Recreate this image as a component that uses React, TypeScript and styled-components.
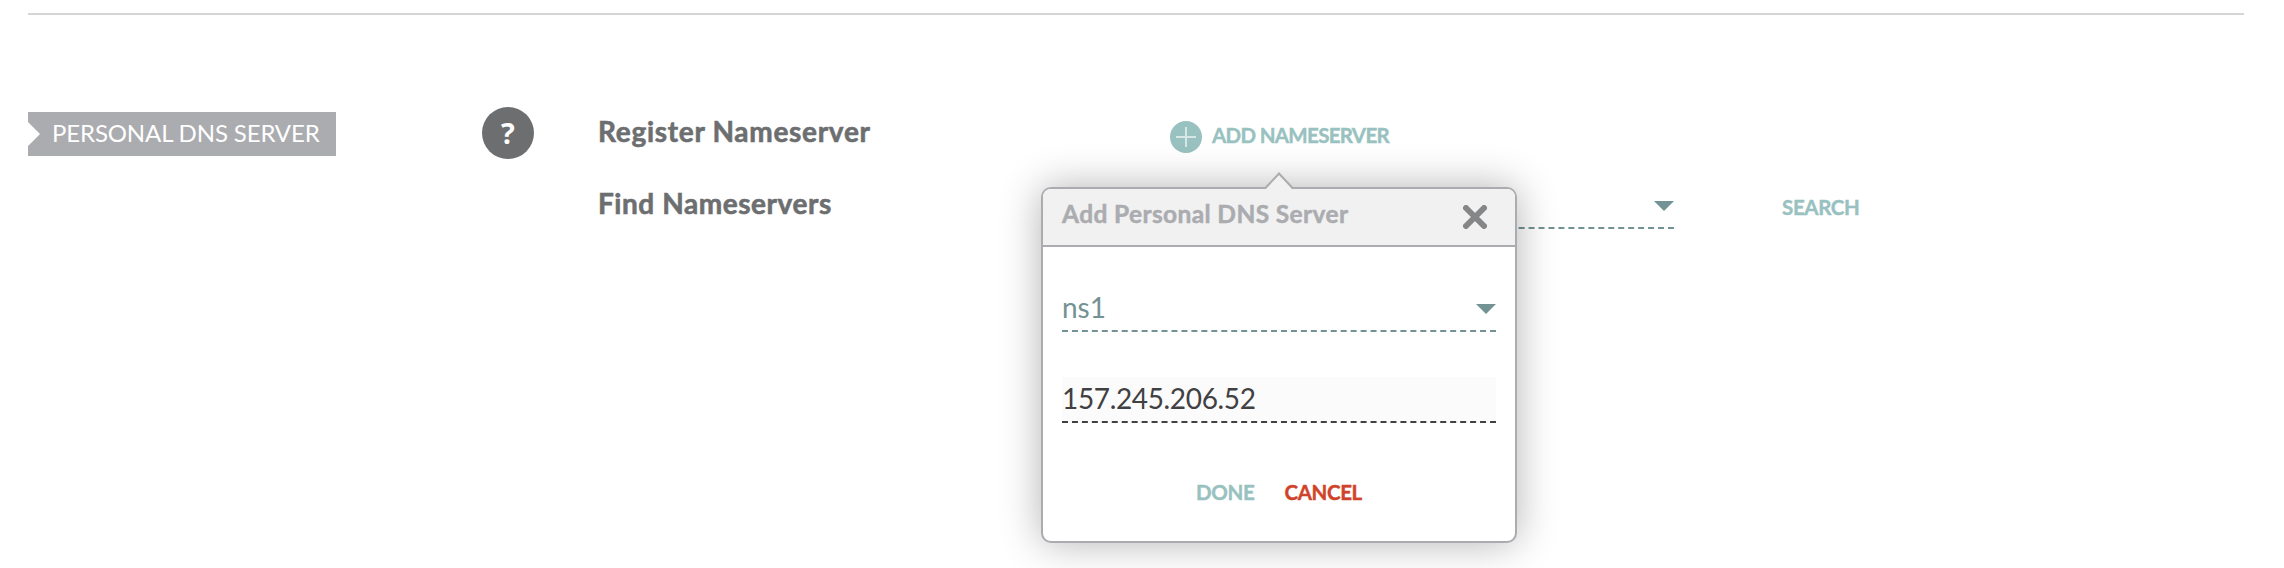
import React from "react";
import styled, { createGlobalStyle } from "styled-components";

const colors = {
  teal: "#98c1c0",
  tealDark: "#739294",
  gray: "#6d6e70",
  silver: "#abacb0",
  ink: "#414042",
  red: "#d0432b",
};

const GlobalStyle = createGlobalStyle`
  * { box-sizing: border-box; }
  body {
    margin: 0;
    background: #fff;
    font-family: Lato, "Open Sans", sans-serif;
    overflow: hidden;
  }
  button, input { font-family: inherit; margin: 0; padding: 0; border: 0; background: none; }
  svg { display: block; }
`;

const Page = styled.main`
  height: 568px;
  padding: 13px 40px 0 28px;
  overflow: hidden;
`;

const Divider = styled.hr`
  height: 2px;
  margin: 0;
  border: 0;
  background: #d5d5d6;
`;

const Section = styled.section`
  display: grid;
  grid-template-columns: 454px 116px 1fr;
  align-items: start;
  padding-top: 80px;
`;

const Ribbon = styled.h2`
  width: 308px;
  height: 44px;
  margin: 17px 0 0;
  padding-left: 24px;
  background: ${colors.silver};
  color: #fff;
  font-size: 24px;
  font-weight: 400;
  line-height: 42px;
  letter-spacing: -0.14px;
  white-space: nowrap;
  clip-path: polygon(0 0, 100% 0, 100% 100%, 0 100%, 0 34px, 12px 22px, 0 10px);
`;

const Help = styled.button`
  width: 52px;
  height: 52px;
  margin-top: 12px;
  border-radius: 50%;
  background: ${colors.gray};
  color: #fff;
  font-family: "Open Sans", sans-serif;
  font-size: 29px;
  font-weight: 700;
  line-height: 52px;
`;

const Row = styled.div`
  display: flex;
  align-items: center;
  height: 72px;
`;

const Label = styled.div<{ $spacing: number }>`
  flex: 0 0 572px;
  color: ${colors.gray};
  font-size: 28px;
  font-weight: 700;
  line-height: 72px;
  letter-spacing: ${(p) => p.$spacing}px;
  -webkit-text-stroke: 0.6px currentColor;
`;

const Action = styled.button<{ $color?: string; $spacing?: number }>`
  color: ${(p) => p.$color ?? colors.teal};
  font-size: 20.5px;
  font-weight: 700;
  line-height: 32px;
  letter-spacing: ${(p) => p.$spacing ?? -0.35}px;
  white-space: nowrap;
  -webkit-text-stroke: 0.4px currentColor;
`;

const AddAnchor = styled.div`
  position: relative;
  display: flex;
  align-items: center;
  gap: 10px;
  margin-top: 12px;

  > ${Action} { margin-bottom: 4px; }
`;

const Select = styled.div<{ $width: number; $height: number }>`
  display: flex;
  align-items: center;
  justify-content: space-between;
  width: ${(p) => p.$width}px;
  height: ${(p) => p.$height}px;
  border-bottom: 2px dashed ${colors.tealDark};
  color: ${colors.tealDark};
  font-size: 28px;
`;

const SelectValue = styled.span`
  padding-bottom: 4px;
`;

const FindSlot = styled.div`
  padding-top: 8px;
`;

const SearchSlot = styled.div`
  margin: 7px 0 0 108px;
`;

const Popover = styled.div`
  position: absolute;
  z-index: 2;
  top: 68px;
  left: -129px;
  width: 476px;
  height: 356px;
  border: 2px solid ${colors.silver};
  border-radius: 10px;
  background: #fff;
  box-shadow: 0 0 40px rgba(0, 0, 0, 0.3);
`;

const Pointer = styled.svg`
  position: absolute;
  top: -18px;
  left: 221px;
`;

const PopoverHeader = styled.header`
  display: flex;
  align-items: flex-start;
  justify-content: space-between;
  height: 58px;
  padding: 16px 28px 0 19px;
  border-bottom: 2px solid ${colors.silver};
  border-radius: 8px 8px 0 0;
  background: #f1f1f1;
`;

const Title = styled.h3`
  margin: -7px 0 0;
  color: ${colors.silver};
  font-size: 24.5px;
  font-weight: 700;
  line-height: 32px;
  letter-spacing: 0.38px;
  -webkit-text-stroke: 0.5px currentColor;
`;

const Form = styled.div`
  display: flex;
  flex-direction: column;
  padding: 41px 19px 0;
`;

const Address = styled.input`
  width: 434px;
  height: 46px;
  margin-top: 45px;
  padding-bottom: 2px;
  border-bottom: 2px dashed ${colors.ink};
  background: #fbfbfb;
  color: ${colors.ink};
  font-size: 28px;
  letter-spacing: -0.35px;
  outline: none;
`;

const Buttons = styled.div`
  display: flex;
  justify-content: center;
  gap: 30px;
  margin-top: 53px;
`;

const Caret = () => (
  <svg width="20" height="10" viewBox="0 0 20 10" aria-hidden="true">
    <path d="M0 0H20L10 10Z" fill={colors.tealDark} />
  </svg>
);

const PlusIcon = () => (
  <svg width="32" height="32" viewBox="0 0 32 32" aria-hidden="true">
    <circle cx="16" cy="16" r="16" fill={colors.teal} />
    <path d="M6 16H26M16 6V26" stroke="#d6e7e6" strokeWidth="2" />
  </svg>
);

const CloseIcon = () => (
  <svg width="24" height="24" viewBox="0 0 24 24" aria-hidden="true">
    <path d="M3 3L21 21M21 3L3 21" stroke="#858688" strokeWidth="6" strokeLinecap="round" />
  </svg>
);

export default function App() {
  return (
    <Page>
      <GlobalStyle />
      <Divider />
      <Section>
        <Ribbon>PERSONAL DNS SERVER</Ribbon>
        <Help>?</Help>
        <div>
          <Row>
            <Label $spacing={0.7}>Register Nameserver</Label>
            <AddAnchor>
              <PlusIcon />
              <Action $spacing={-0.68}>ADD NAMESERVER</Action>
              <Popover>
                <Pointer width="30" height="20" viewBox="0 0 30 20" aria-hidden="true">
                  <path d="M1 20V18.5L15 3L29 18.5V20Z" fill="#f1f1f1" />
                  <path d="M1 17.5L15 2.5L29 17.5" fill="none" stroke={colors.silver} strokeWidth="2" />
                </Pointer>
                <PopoverHeader>
                  <Title>Add Personal DNS Server</Title>
                  <CloseIcon />
                </PopoverHeader>
                <Form>
                  <Select $width={434} $height={44}>
                    <SelectValue>ns1</SelectValue>
                    <Caret />
                  </Select>
                  <Address defaultValue="157.245.206.52" />
                  <Buttons>
                    <Action>DONE</Action>
                    <Action $color={colors.red}>CANCEL</Action>
                  </Buttons>
                </Form>
              </Popover>
            </AddAnchor>
          </Row>
          <Row>
            <Label $spacing={0.55}>Find Nameservers</Label>
            <FindSlot>
              <Select $width={504} $height={44}>
                <SelectValue />
                <Caret />
              </Select>
            </FindSlot>
            <SearchSlot>
              <Action>SEARCH</Action>
            </SearchSlot>
          </Row>
        </div>
      </Section>
    </Page>
  );
}
